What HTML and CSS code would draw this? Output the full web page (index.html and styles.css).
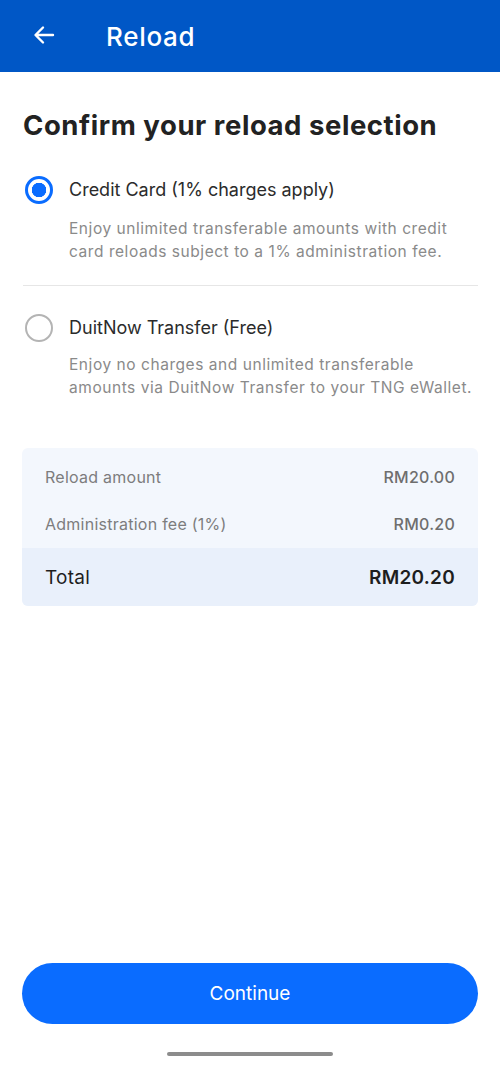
FILE: index.html
```html
<!doctype html>
<html lang="en">
<head>
<meta charset="utf-8">
<meta name="viewport" content="width=device-width, initial-scale=1">
<title>Reload</title>
<link rel="stylesheet" href="styles.css">
</head>
<body>
<div class="screen">
  <header class="topbar">
    <svg class="back" width="24" height="24" viewBox="0 0 24 24" aria-hidden="true">
      <path d="M21 12H4M11 4.5 3.5 12l7.5 7.5" fill="none" stroke="#fff" stroke-width="2.4" stroke-linecap="round" stroke-linejoin="round"/>
    </svg>
    <h1>Reload</h1>
  </header>

  <main class="content">
    <h2 class="title">Confirm your reload selection</h2>

    <div class="option">
      <span class="radio checked"></span>
      <div class="option-text">
        <p class="option-label">Credit Card (1% charges apply)</p>
        <p class="option-desc">Enjoy unlimited transferable amounts with credit card reloads subject to a 1% administration fee.</p>
      </div>
    </div>

    <hr class="divider">

    <div class="option">
      <span class="radio"></span>
      <div class="option-text">
        <p class="option-label">DuitNow Transfer (Free)</p>
        <p class="option-desc">Enjoy no charges and unlimited transferable amounts via DuitNow Transfer to your TNG eWallet.</p>
      </div>
    </div>

    <section class="summary">
      <div class="row"><span>Reload amount</span><span class="amt">RM20.00</span></div>
      <div class="row"><span>Administration fee (1%)</span><span class="amt">RM0.20</span></div>
      <div class="row total"><span>Total</span><span class="amt">RM20.20</span></div>
    </section>
  </main>

  <footer class="bottom">
    <button class="continue">Continue</button>
    <div class="home-bar"></div>
  </footer>
</div>
</body>
</html>
```

FILE: styles.css
```css
:root{--blue:#0057c6;--btn:#0a6cff;--text:#262626;--muted:#8a8a8a;}
html,body{margin:0;padding:0;background:#fff;font-family:Inter,"Noto Sans",Arial,sans-serif;color:var(--text);}

.screen{
  display:flex;
  flex-direction:column;
  height:1068px;
}

/* top bar */
.topbar{
  background:var(--blue);
  height:72px;
  display:flex;
  align-items:center;
  padding:0 0 0 32px;
  box-sizing:border-box;
}
.back{margin-top:-2px;}
.topbar h1{
  margin:0 0 0 50px;
  color:#fff;
  font-size:26px;
  font-weight:500;
  letter-spacing:0.7px;
}

.content{
  flex:1;
  padding:0 22px;
}

.title{
  font-size:27.5px;
  font-weight:700;
  margin:36px 0 0 1px;
  line-height:34px;
  color:#222;
  letter-spacing:0.55px;
}

/* radio options */
.option{
  display:flex;
  gap:16px;
  padding-left:3px;
}
.option:first-of-type{margin-top:35px;}
.radio{
  flex:none;
  width:28px;
  height:28px;
  border-radius:50%;
  box-sizing:border-box;
  border:2px solid #b4b4b4;
  margin-top:-1px;
}
.radio.checked{
  border:3px solid var(--btn);
  background:radial-gradient(circle,var(--btn) 0 7px,#fff 7.5px);
}
.option-label{
  margin:0;
  font-size:18px;
  line-height:26px;
  color:#2b2b2b;
}
.option-desc{
  margin:14px 0 0;
  font-size:15.5px;
  line-height:23px;
  color:var(--muted);
  letter-spacing:0.55px;
  max-width:409px;
}
.divider + .option .option-desc{margin-top:12px;}

.divider{
  border:none;
  border-top:1px solid #e6e6e6;
  margin:22px 0 29px 1px;
}

/* summary */
.summary{
  margin-top:49px;
  background:#f3f7fd;
  border-radius:6px;
  overflow:hidden;
}
.row{
  display:flex;
  justify-content:space-between;
  padding:0 23px;
  height:45px;
  align-items:center;
  font-size:16px;
  color:#7d7d7d;
  letter-spacing:0.25px;
}
.row:first-child{height:53px;padding-top:4px;box-sizing:border-box;}
.row .amt{font-weight:500;color:#6e6e6e;}
.row.total{
  background:#e9f0fb;
  height:58px;
  font-size:19px;
  color:#1e1e1e;
  margin-top:2px;
}
.row.total .amt{font-weight:600;color:#1e1e1e;}

/* bottom */
.bottom{
  padding:0 22px;
  display:flex;
  flex-direction:column;
  align-items:center;
}
.continue{
  width:100%;
  height:61px;
  border:none;
  border-radius:31px;
  background:var(--btn);
  color:#fff;
  font-family:inherit;
  font-size:19px;
}
.home-bar{
  width:166px;
  height:4px;
  border-radius:2px;
  background:#8c8c8c;
  margin:28px 0 12px;
}
```
